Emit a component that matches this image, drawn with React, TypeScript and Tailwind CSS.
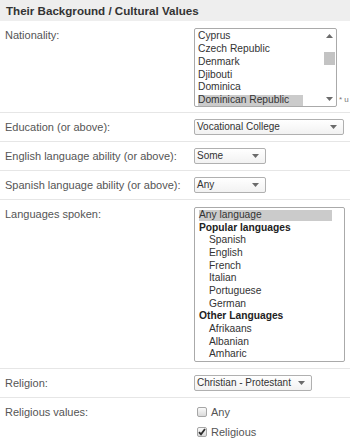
import React from "react";

const nationalities = ["Cyprus", "Czech Republic", "Denmark", "Djibouti", "Dominica", "Dominican Republic"];

type LangItem = { label: string; kind: "option" | "group"; indent?: boolean; selected?: boolean };

const languages: LangItem[] = [
  { label: "Any language", kind: "option", selected: true },
  { label: "Popular languages", kind: "group" },
  { label: "Spanish", kind: "option", indent: true },
  { label: "English", kind: "option", indent: true },
  { label: "French", kind: "option", indent: true },
  { label: "Italian", kind: "option", indent: true },
  { label: "Portuguese", kind: "option", indent: true },
  { label: "German", kind: "option", indent: true },
  { label: "Other Languages", kind: "group" },
  { label: "Afrikaans", kind: "option", indent: true },
  { label: "Albanian", kind: "option", indent: true },
  { label: "Amharic", kind: "option", indent: true },
];

function Arrow({ up = false }: { up?: boolean }) {
  return (
    <svg width="7" height="4" viewBox="0 0 7 4" className="block">
      <path d={up ? "M0 4 L3.5 0 L7 4 Z" : "M0 0 L7 0 L3.5 4 Z"} fill="#6b6b6b" />
    </svg>
  );
}

// fake dropdown, drawn like the old chrome select
function Select({ value, width }: { value: string; width: string }) {
  return (
    <div
      className={`${width} flex h-[16px] items-center justify-between rounded-[2px] border border-[#b0b0b0] bg-gradient-to-b from-white to-[#f2f2f2] pl-[2px] pr-[6px] text-[10px] leading-[14px] text-[#333]`}
    >
      <span className="whitespace-nowrap">{value}</span>
      <Arrow />
    </div>
  );
}

function Checkbox({ checked, label }: { checked?: boolean; label: string }) {
  return (
    <div className="flex h-[20px] items-center">
      <span className="relative flex h-[10px] w-[10px] items-center justify-center rounded-[2px] border border-[#a6a6a6] bg-gradient-to-b from-[#fafafa] to-[#dadada]">
        {checked && (
          <svg width="8" height="8" viewBox="0 0 8 8" className="block">
            <path d="M1 4.2 L3 6.4 L7 1" stroke="#2e2e2e" strokeWidth="1.8" fill="none" />
          </svg>
        )}
      </span>
      <span className="ml-[4px] text-[11px] text-[#555]">{label}</span>
    </div>
  );
}

function Label({ children, top = false }: { children: React.ReactNode; top?: boolean }) {
  return (
    <div className={`pl-[5px] text-[11px] leading-[14px] text-[#555] ${top ? "pt-[7px]" : ""}`}>{children}</div>
  );
}

export default function App() {
  return (
    <div className="w-[350px] overflow-hidden bg-white font-['Liberation_Sans',Arial,sans-serif]">
      <div className="h-[21px] bg-[#eeeeee] pl-[6px] text-[11.6px] font-bold leading-[21px] text-[#333]">
        Their Background / Cultural Values
      </div>

      {/* nationality */}
      <div className="grid grid-cols-[194px_1fr] border-b border-[#e6e6e6] pb-[5px]">
        <Label top>Nationality:</Label>
        <div className="flex items-end pt-[7px]">
          <div className="flex h-[79px] w-[143px] shrink-0 overflow-hidden rounded-[2px] border border-[#aaaaaa]">
            <div className="flex-1 pt-[1px] text-[10.25px] text-[#333]">
              {nationalities.map((n, i) => (
                <div
                  key={n}
                  className={`h-[12.85px] bg-clip-content py-[1px] pl-[3px] leading-[10.85px] whitespace-nowrap ${
                    i === nationalities.length - 1 ? "w-[108px] bg-[#cbcbcb]" : ""
                  }`}
                >
                  {n}
                </div>
              ))}
            </div>
            <div className="mr-[1px] flex w-[11px] flex-col items-center justify-between py-[5px]">
              <Arrow up />
              <div className="-mt-[18px] h-[13px] w-[11px] bg-[#c3c3c3]" />
              <Arrow />
            </div>
          </div>
          <span className="ml-[2px] whitespace-nowrap pb-[1px] text-[8px] text-[#777]">* u</span>
        </div>
      </div>

      {/* education */}
      <div className="grid h-[29px] grid-cols-[194px_1fr] items-center border-b border-[#e6e6e6]">
        <Label>Education (or above):</Label>
        <Select value="Vocational College" width="w-[150px]" />
      </div>

      <div className="grid h-[29px] grid-cols-[194px_1fr] items-center border-b border-[#e6e6e6]">
        <Label>English language ability (or above):</Label>
        <Select value="Some" width="w-[72px]" />
      </div>

      <div className="grid h-[29px] grid-cols-[194px_1fr] items-center border-b border-[#e6e6e6]">
        <Label>Spanish language ability (or above):</Label>
        <Select value="Any" width="w-[72px]" />
      </div>

      {/* languages spoken */}
      <div className="grid grid-cols-[194px_1fr] border-b border-[#e6e6e6] pb-[6px]">
        <Label top>Languages spoken:</Label>
        <div className="pt-[7px]">
          <div className="h-[155px] w-[151px] overflow-hidden rounded-[2px] border border-[#aaaaaa] pt-[1px] text-[10.25px] text-[#333]">
            {languages.map((l) => (
              <div
                key={l.label}
                className={`h-[12.67px] bg-clip-content py-[1px] leading-[10.67px] whitespace-nowrap ${
                  l.indent ? "pl-[14px]" : "pl-[4px]"
                } ${l.kind === "group" ? "font-bold text-[#222]" : ""} ${
                  l.selected ? "w-[137px] bg-[#cbcbcb]" : ""
                }`}
              >
                {l.label}
              </div>
            ))}
          </div>
        </div>
      </div>

      <div className="grid h-[29px] grid-cols-[194px_1fr] items-center border-b border-[#e6e6e6]">
        <Label>Religion:</Label>
        <Select value="Christian - Protestant" width="w-[118px]" />
      </div>

      <div className="grid grid-cols-[194px_1fr] pb-[10px]">
        <Label top>Religious values:</Label>
        <div className="pl-[3px] pt-[4px]">
          <Checkbox label="Any" />
          <Checkbox checked label="Religious" />
        </div>
      </div>
    </div>
  );
}
